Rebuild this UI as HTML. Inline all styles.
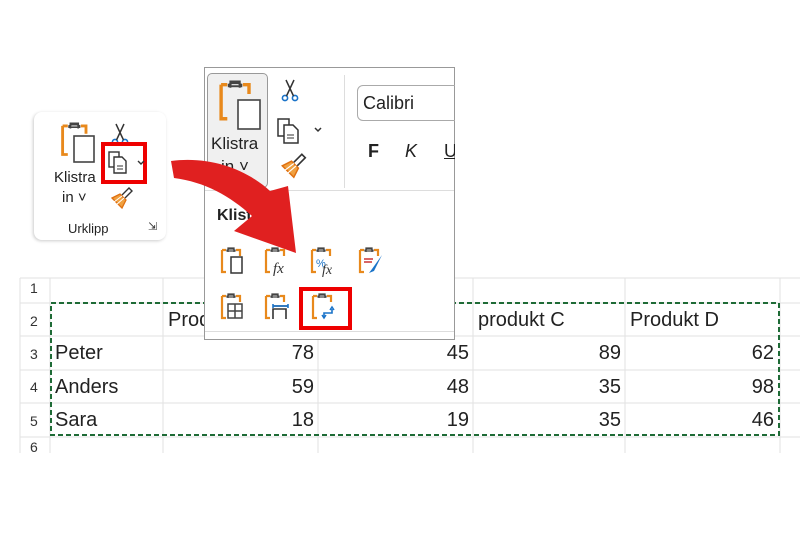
<!DOCTYPE html>
<html><head><meta charset="utf-8"><style>
body{margin:0;width:800px;height:533px;background:#fff;position:relative;overflow:hidden;font-family:"Liberation Sans",sans-serif;}
.a{position:absolute;}
.t{position:absolute;font-size:20px;color:#222;line-height:1;}
.r{text-align:right;}
</style></head><body>
<svg width="0" height="0" style="position:absolute">
<defs>
<g id="clip"><path d="M2 3h4M2 3v22h4M16 3h4v6" fill="none" stroke="#e8891c" stroke-width="2.2"/><path d="M7 4h8v-1l-2-1h-4l-2 1z M8 5V1h6v4" fill="#fff" stroke="#444" stroke-width="1.3"/></g>
<g id="brush"><path d="M2 12l8-4 6 6-4 8z" fill="#f0a040" stroke="#e07010" stroke-width="1.3"/><path d="M4 16l8-6M6 19l8-7" stroke="#fff" stroke-width="1"/><path d="M12 9l7-7 3 3-7 7" fill="#fff" stroke="#333" stroke-width="1.4"/></g>
<g id="sc"><circle cx="4" cy="20" r="2.6" fill="none" stroke="#1a73c8" stroke-width="1.6"/><circle cx="14" cy="20" r="2.6" fill="none" stroke="#1a73c8" stroke-width="1.6"/><path d="M5.5 18L13 2M12.5 18L5 2" stroke="#333" stroke-width="1.5"/></g>
</defs></svg>

<svg class="a" style="left:0;top:0" width="800" height="533">
<g stroke="#e2e2e2" stroke-width="1">
<line x1="20" y1="278" x2="800" y2="278"/>
<line x1="20" y1="303" x2="800" y2="303"/>
<line x1="20" y1="336" x2="800" y2="336"/>
<line x1="20" y1="370" x2="800" y2="370"/>
<line x1="20" y1="403" x2="800" y2="403"/>
<line x1="20" y1="437" x2="800" y2="437"/>
<line x1="50" y1="278" x2="50" y2="453"/>
<line x1="163" y1="278" x2="163" y2="453"/>
<line x1="318" y1="278" x2="318" y2="453"/>
<line x1="473" y1="278" x2="473" y2="453"/>
<line x1="625" y1="278" x2="625" y2="453"/>
<line x1="780" y1="278" x2="780" y2="453"/>
<line x1="20" y1="278" x2="20" y2="453"/>
</g>
<rect x="51" y="303" width="728" height="132" fill="none" stroke="#1e6b36" stroke-width="2" stroke-dasharray="5,3"/>
</svg>
<div class="t" style="left:30px;top:281px;font-size:14px;color:#333">1</div>
<div class="t" style="left:30px;top:314px;font-size:14px;color:#333">2</div>
<div class="t" style="left:30px;top:347px;font-size:14px;color:#333">3</div>
<div class="t" style="left:30px;top:380px;font-size:14px;color:#333">4</div>
<div class="t" style="left:30px;top:414px;font-size:14px;color:#333">5</div>
<div class="t" style="left:30px;top:440px;font-size:14px;color:#333">6</div>
<div class="t" style="left:168px;top:310px">Produkt A</div>
<div class="t" style="left:478px;top:310px">produkt C</div>
<div class="t" style="left:630px;top:310px">Produkt D</div>
<div class="t" style="left:55px;top:343px">Peter</div>
<div class="t" style="left:55px;top:377px">Anders</div>
<div class="t" style="left:55px;top:410px">Sara</div>
<div class="t r" style="left:260px;width:54px;top:343px">78</div>
<div class="t r" style="left:415px;width:54px;top:343px">45</div>
<div class="t r" style="left:567px;width:54px;top:343px">89</div>
<div class="t r" style="left:720px;width:54px;top:343px">62</div>
<div class="t r" style="left:260px;width:54px;top:377px">59</div>
<div class="t r" style="left:415px;width:54px;top:377px">48</div>
<div class="t r" style="left:567px;width:54px;top:377px">35</div>
<div class="t r" style="left:720px;width:54px;top:377px">98</div>
<div class="t r" style="left:260px;width:54px;top:410px">18</div>
<div class="t r" style="left:415px;width:54px;top:410px">19</div>
<div class="t r" style="left:567px;width:54px;top:410px">35</div>
<div class="t r" style="left:720px;width:54px;top:410px">46</div>

<div class="a" style="left:34px;top:112px;width:132px;height:128px;border-radius:8px;background:#fff;box-shadow:-1px 1px 3px #ccc"></div>
<svg class="a" style="left:60px;top:122px" width="40" height="46"><g transform="scale(1.3)"><use href="#clip"/></g><rect x="14" y="14" width="20" height="26" fill="#fff" stroke="#444" stroke-width="1.6"/></svg>
<div class="t" style="left:54px;top:170px;font-size:15px">Klistra</div>
<div class="t" style="left:62px;top:190px;font-size:15px">in ˅</div>
<svg class="a" style="left:111px;top:122px" width="20" height="24"><use href="#sc"/></svg>
<svg class="a" style="left:110px;top:186px" width="24" height="24"><use href="#brush"/></svg>
<div class="a" style="left:101px;top:142px;width:46px;height:42px;border:4px solid #e00;box-sizing:border-box;background:#fff"></div>
<svg class="a" style="left:108px;top:150px" width="40" height="26"><rect x="1" y="2" width="10" height="15" fill="none" stroke="#333" stroke-width="1.4"/><path d="M6 7h8l4 4v12H6z" fill="#fff" stroke="#333" stroke-width="1.4"/><path d="M9 16h6M9 19h6" stroke="#333"/><path d="M30 11l3 3 3-3" fill="none" stroke="#333" stroke-width="1.4"/></svg>
<div class="t" style="left:68px;top:222px;font-size:13px">Urklipp</div>
<div class="t" style="left:148px;top:222px;font-size:11px;color:#333">⇲</div>

<div class="a" style="left:204px;top:67px;width:251px;height:273px;border:1px solid #999;box-sizing:border-box;background:#fff"></div>
<div class="a" style="left:207px;top:73px;width:61px;height:115px;border:1px solid #999;border-radius:5px;background:#f0f0f0;box-sizing:border-box"></div>
<div class="a" style="left:205px;top:190px;width:249px;height:1px;background:#ddd"></div>
<div class="a" style="left:344px;top:75px;width:1px;height:113px;background:#ddd"></div>
<svg class="a" style="left:218px;top:80px" width="46" height="54"><g transform="scale(1.55)"><use href="#clip"/></g><rect x="20" y="20" width="22" height="29" fill="#fff" stroke="#444" stroke-width="1.6"/></svg>
<div class="t" style="left:211px;top:135px;font-size:17px">Klistra</div>
<div class="t" style="left:221px;top:158px;font-size:17px">in ˅</div>
<svg class="a" style="left:281px;top:78px" width="20" height="26"><use href="#sc"/></svg>
<svg class="a" style="left:277px;top:117px" width="50" height="30"><rect x="1" y="2" width="11" height="17" fill="none" stroke="#333" stroke-width="1.5"/><path d="M7 8h9l5 5v13H7z" fill="#fff" stroke="#333" stroke-width="1.5"/><path d="M10 18h7M10 21h7" stroke="#333"/><path d="M38 11l3 3 3-3" fill="none" stroke="#333" stroke-width="1.5"/></svg>
<svg class="a" style="left:280px;top:152px" width="28" height="28"><g transform="scale(1.15)"><use href="#brush"/></g></svg>
<div class="a" style="left:357px;top:85px;width:110px;height:36px;border:1px solid #aaa;border-radius:6px;box-sizing:border-box"></div>
<div class="t" style="left:363px;top:94px;font-size:18px">Calibri</div>
<div class="t" style="left:368px;top:142px;font-size:18px;font-weight:bold">F</div>
<div class="t" style="left:405px;top:142px;font-size:18px;font-style:italic">K</div>
<div class="t" style="left:444px;top:142px;font-size:18px;text-decoration:underline">U</div>
<div class="a" style="left:455px;top:60px;width:20px;height:130px;background:#fff"></div>
<div class="t" style="left:217px;top:208px;font-size:16px;font-weight:bold">Klistra in</div>

<svg class="a" style="left:220px;top:247px" width="30" height="30"><use href="#clip"/><rect x="11" y="10" width="11" height="16" fill="#fff" stroke="#333" stroke-width="1.5"/></svg>
<svg class="a" style="left:264px;top:247px" width="30" height="30"><use href="#clip"/><text x="9" y="26" font-family="Liberation Serif" font-style="italic" font-size="15" fill="#333">fx</text></svg>
<svg class="a" style="left:310px;top:247px" width="30" height="30"><use href="#clip"/><text x="6" y="20" font-size="11" fill="#1a73c8">%</text><text x="12" y="27" font-family="Liberation Serif" font-style="italic" font-size="14" fill="#333">fx</text></svg>
<svg class="a" style="left:358px;top:247px" width="30" height="30"><use href="#clip"/><path d="M6 12h9M6 15h8" stroke="#c33" stroke-width="1.5"/><path d="M24 8l-10 14-3 4 5-2z" fill="#1a73c8"/></svg>
<svg class="a" style="left:220px;top:293px" width="30" height="30"><use href="#clip"/><rect x="8" y="11" width="14" height="14" fill="#fff" stroke="#444" stroke-width="1.5"/><path d="M15 11v14M8 18h14" stroke="#444" stroke-width="1.5"/></svg>
<svg class="a" style="left:264px;top:293px" width="30" height="30"><use href="#clip"/><path d="M9 13h15M9 26V16h13v10" fill="none" stroke="#333" stroke-width="1.6"/><path d="M9 11v4M24 11v4" stroke="#1a73c8" stroke-width="1.6"/><path d="M9 13h15" stroke="#1a73c8" stroke-width="1.6"/></svg>
<div class="a" style="left:299px;top:287px;width:53px;height:43px;border:4px solid #e00;box-sizing:border-box"></div>
<svg class="a" style="left:311px;top:293px" width="30" height="30"><use href="#clip"/><path d="M13 25v-5h8v-4" fill="none" stroke="#1a73c8" stroke-width="1.6"/><path d="M11 22l2 3 2-3M19 17l2-3 2 3" fill="none" stroke="#1a73c8" stroke-width="1.5"/></svg>
<div class="a" style="left:205px;top:331px;width:249px;height:1px;background:#ddd"></div>

<svg class="a" style="left:0;top:0" width="800" height="533">
<path d="M171 161 C210 156 246 169 270 191 L288 186 L296 253 L234 231 L252 216 C230 196 205 182 174 178 Z" fill="#e02020"/>
</svg>
</body></html>
